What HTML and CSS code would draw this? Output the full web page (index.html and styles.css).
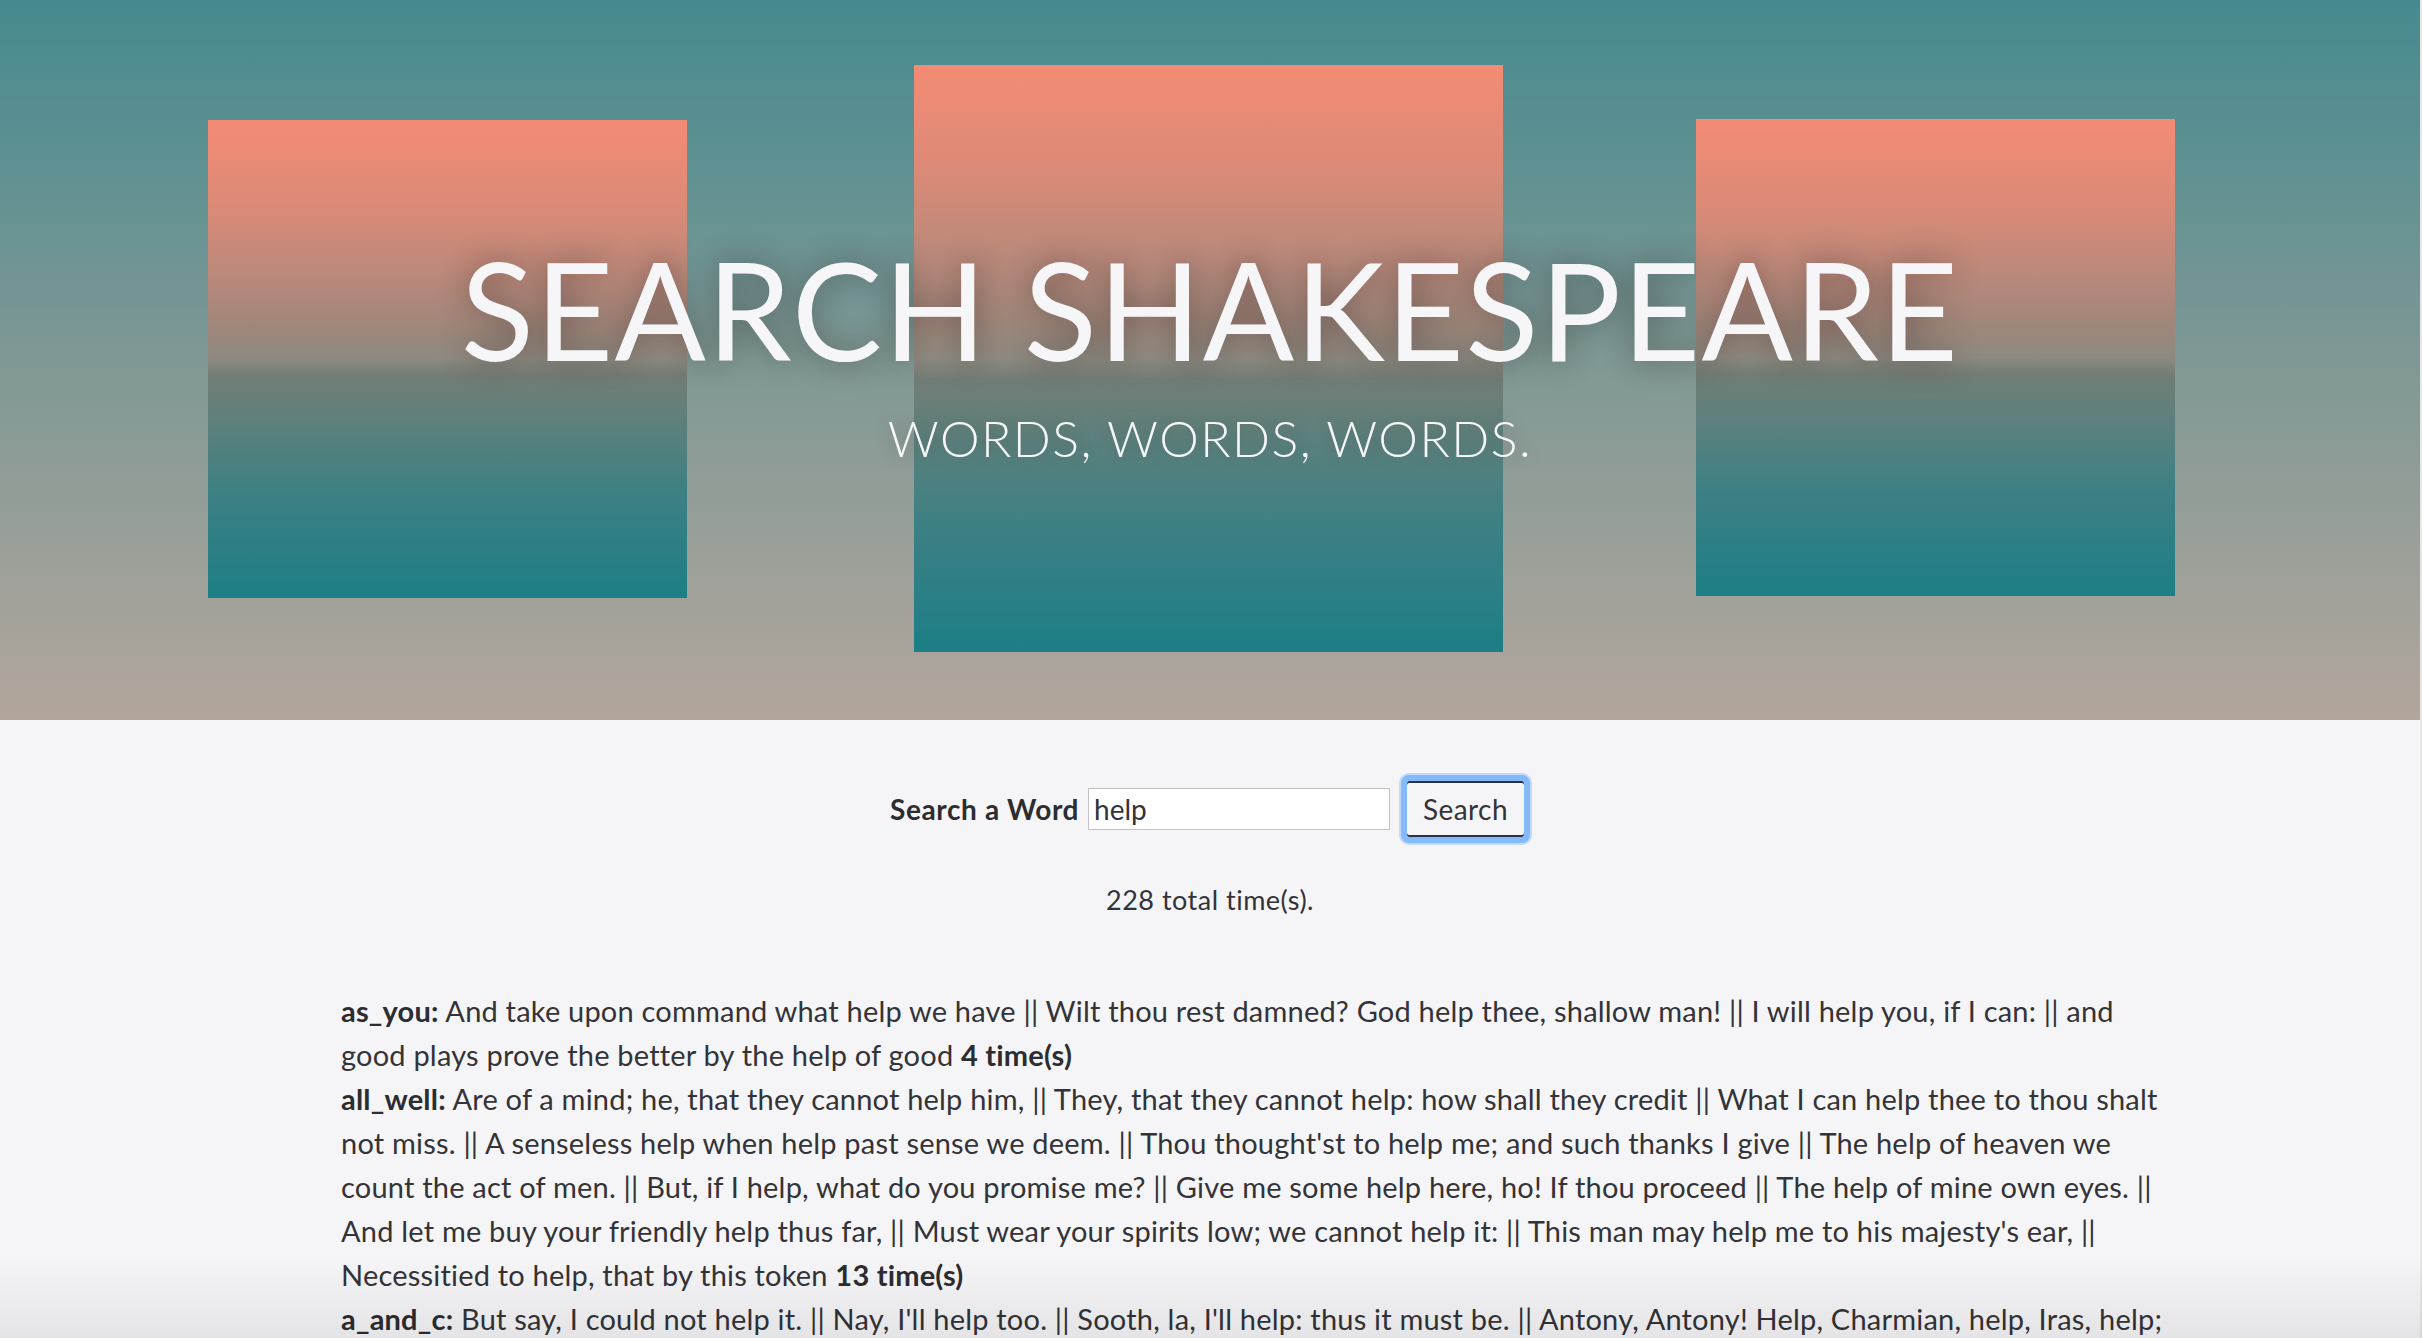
FILE: index.html
```html
<!DOCTYPE html>
<html lang="en">
<head>
<meta charset="utf-8">
<title>Search Shakespeare</title>
<link rel="stylesheet" href="styles.css">
</head>
<body>
<div class="page">
  <header class="hero">
    <div class="shapes">
      <div class="shape shape-left"></div>
      <div class="shape shape-center"></div>
      <div class="shape shape-right"></div>
    </div>
    <div class="hero-text">
      <h1 class="title">SEARCH SHAKESPEARE</h1>
      <p class="subtitle">WORDS, WORDS, WORDS.</p>
    </div>
  </header>
  <main class="content">
    <form class="search">
      <label class="search-label" for="q">Search a Word</label>
      <input id="q" class="search-input" type="text" value="help">
      <button class="search-btn" type="button">Search</button>
    </form>
    <p class="total">228 total time(s).</p>
    <div class="results">
      <div class="entry"><b>as_you:</b> And take upon command what help we have || Wilt thou rest damned? God help thee, shallow man! || I will help you, if I can: || and good plays prove the better by the help of good <b>4 time(s)</b></div>
      <div class="entry"><b>all_well:</b> Are of a mind; he, that they cannot help him, || They, that they cannot help: how shall they credit || What I can help thee to thou shalt not miss. || A senseless help when help past sense we deem. || Thou thought'st to help me; and such thanks I give || The help of heaven we count the act of men. || But, if I help, what do you promise me? || Give me some help here, ho! If thou proceed || The help of mine own eyes. || And let me buy your friendly help thus far, || Must wear your spirits low; we cannot help it: || This man may help me to his majesty's ear, || Necessitied to help, that by this token <b>13 time(s)</b></div>
      <div class="entry"><b>a_and_c:</b> But say, I could not help it. || Nay, I'll help too. || Sooth, la, I'll help: thus it must be. || Antony, Antony! Help, Charmian, help, Iras, help; Help, friends below; let's draw him hither. <b>5 time(s)</b></div>
    </div>
  </main>
</div>
<div class="fade"></div>
</body>
</html>
```
FILE: styles.css
```css
html {
  background: #e7e7e8;
}
body {
  margin: 0;
  font-family: Lato, "Open Sans", sans-serif;
  color: #333338;
}
.page {
  margin-right: 2px;
  background: #f5f5f7;
  min-height: 1338px;
}
.hero {
  display: grid;
  height: 720px;
  background: linear-gradient(180deg, #458a8f 0%, #7f9895 50%, #b3a69c 100%);
  overflow: hidden;
}
.shapes,
.hero-text {
  grid-area: 1 / 1;
}
.shapes {
  display: flex;
  align-items: flex-start;
  padding-left: 208px;
}
.shape {
  background: linear-gradient(180deg, #f38b74 0%, #dd8a77 17%, #bb897a 32%, #a0867a 43%, #8d8a80 50%, #727d76 53.5%, #60807c 62%, #3d8084 78%, #1d7e86 100%);
}
.shape-left {
  width: 479px;
  height: 478px;
  margin-top: 120px;
}
.shape-center {
  width: 589px;
  height: 587px;
  margin-top: 65px;
  margin-left: 227px;
}
.shape-right {
  width: 479px;
  height: 477px;
  margin-top: 119px;
  margin-left: 193px;
}
.hero-text {
  padding-top: 242px;
  text-align: center;
  color: #f6f6f8;
}
.title {
  margin: 0;
  font-size: 135px;
  line-height: 1;
  font-weight: 400;
  letter-spacing: 1.3px;
  text-shadow: 0 0 30px rgba(40, 25, 25, 0.45);
}
.subtitle {
  margin: 36px 0 0;
  font-size: 50px;
  line-height: 1;
  font-weight: 300;
  letter-spacing: 1.5px;
  text-shadow: 0 0 18px rgba(40, 25, 25, 0.25);
}
.content {
  padding-bottom: 60px;
}
.search {
  display: flex;
  justify-content: center;
  align-items: center;
  gap: 9px;
  margin: 0;
  padding-top: 55px;
}
.search-label {
  font-size: 28px;
  font-weight: 700;
  letter-spacing: 0.6px;
  color: #2c2c31;
}
.search-input {
  box-sizing: border-box;
  width: 302px;
  height: 42px;
  border: 1px solid #c2c2c4;
  background: #fff;
  padding: 0 5px;
  font-family: Lato, "Open Sans", sans-serif;
  font-size: 28px;
  color: #333338;
  outline: none;
}
.search-btn {
  box-sizing: border-box;
  height: 68px;
  margin-left: 2px;
  padding: 0 16px;
  border: 6px solid #84bafa;
  border-radius: 8px;
  background: #f5f5f7;
  box-shadow: 0 0 0 2px rgba(132, 186, 250, 0.45), inset 0 2px 0 #2c3245, inset 0 -2px 0 #2c3245;
  font-family: Lato, "Open Sans", sans-serif;
  font-size: 28px;
  letter-spacing: 0.4px;
  color: #333338;
}
.total {
  margin: 41px 0 0;
  text-align: center;
  font-size: 27px;
  line-height: 31px;
  letter-spacing: 0.5px;
}
.results {
  margin: 74px 0 0 341px;
  width: 1824px;
  font-size: 29px;
  line-height: 44px;
  letter-spacing: 0.2px;
}
.results b {
  font-weight: 700;
  color: #2c2c31;
}
.fade {
  position: fixed;
  left: 0;
  right: 0;
  bottom: 0;
  height: 80px;
  background: linear-gradient(180deg, rgba(0, 0, 0, 0), rgba(0, 0, 0, 0.065));
  pointer-events: none;
}
```
